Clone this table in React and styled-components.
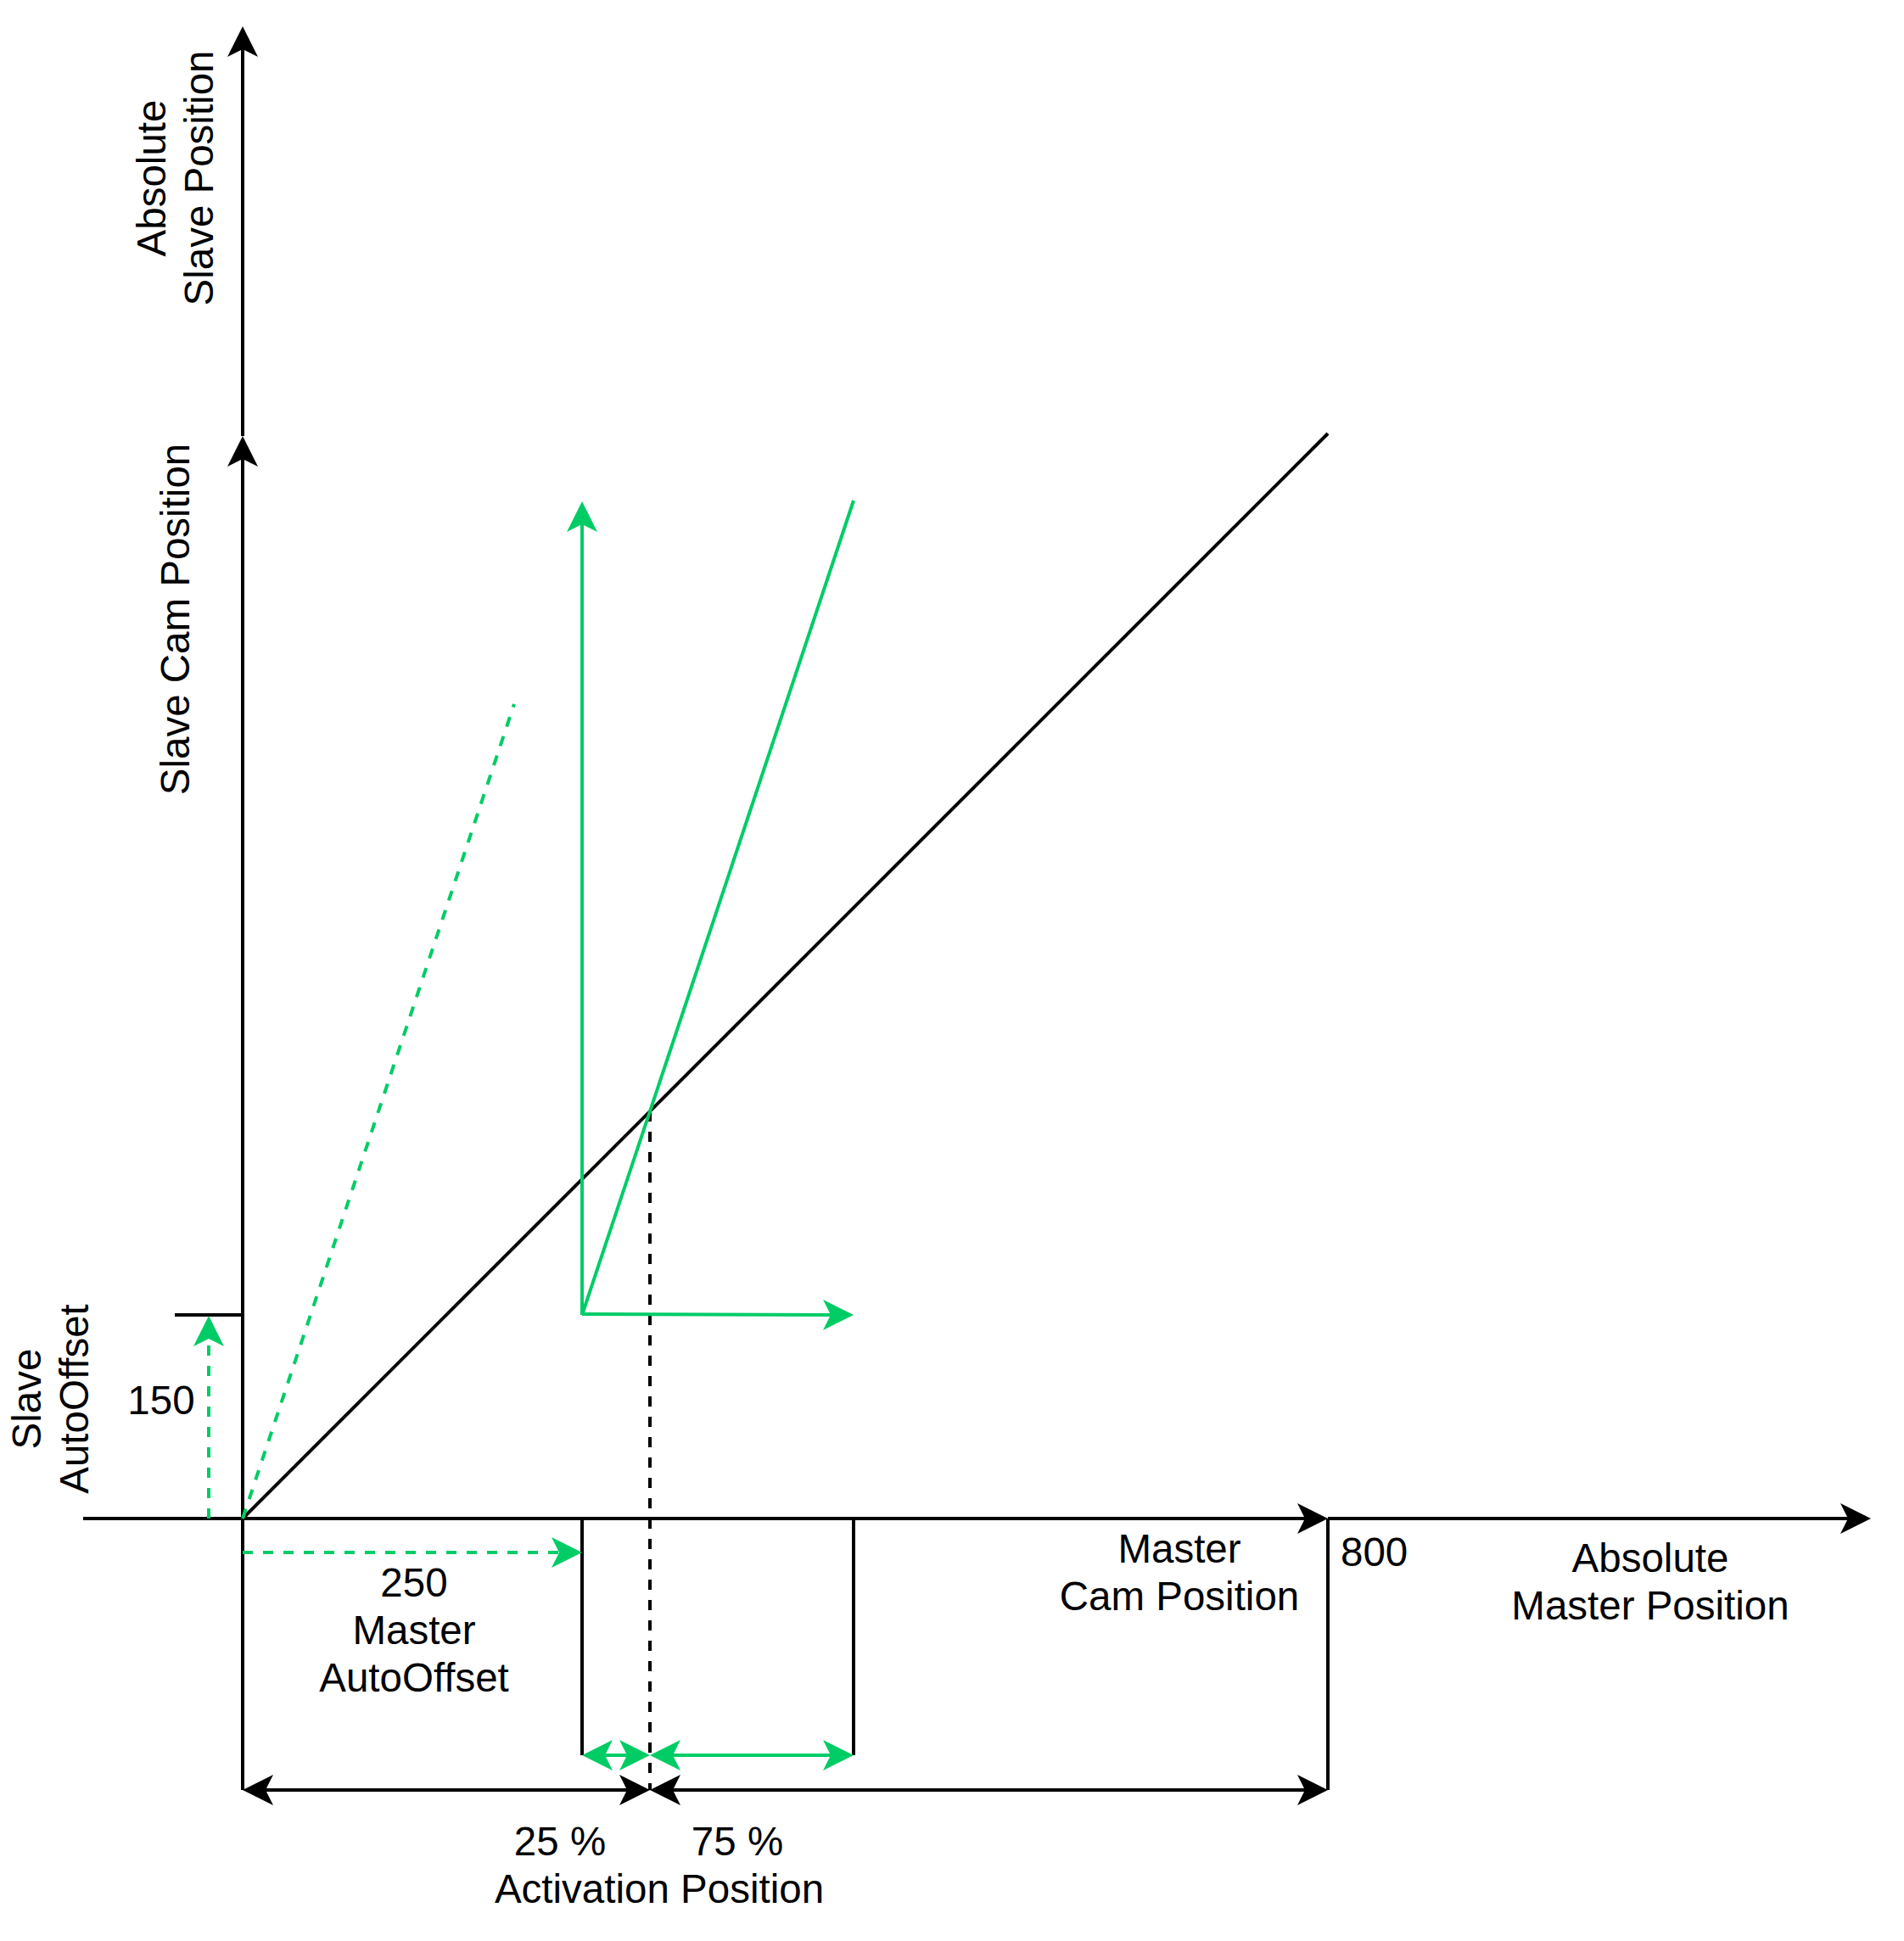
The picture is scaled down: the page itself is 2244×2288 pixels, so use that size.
import React from "react";
import styled, { createGlobalStyle } from "styled-components";

const GREEN = "#00cc66";
const BLACK = "#000000";
const HEAD = { len: 36, half: 18, notch: 27 };
const LINE_GAP = 56;

const GlobalStyle = createGlobalStyle`
  html, body {
    margin: 0;
    padding: 0;
    background: #ffffff;
  }
`;

const Page = styled.div`
  width: 2244px;
  height: 2288px;
  background: #ffffff;
  overflow: hidden;
`;

const Diagram = styled.svg`
  display: block;
  width: 2244px;
  height: 2288px;
`;

const Stroke = styled.line`
  stroke: ${(p) => p.$color};
  stroke-width: 4;
  stroke-dasharray: ${(p) => (p.$dashed ? "12 12" : "none")};
  stroke-linecap: butt;
`;

const Head = styled.path`
  fill: ${(p) => p.$color};
  stroke: none;
`;

const Label = styled.text`
  font-family: "Liberation Sans", Arial, sans-serif;
  font-size: 47.5px;
  fill: #000000;
  text-anchor: ${(p) => p.$anchor || "middle"};
`;

const headPath = (tx, ty, ux, uy) => {
  const nx = -uy;
  const ny = ux;
  const bx = tx - ux * HEAD.len;
  const by = ty - uy * HEAD.len;
  return `M${tx} ${ty} L${bx + nx * HEAD.half} ${by + ny * HEAD.half} L${
    tx - ux * HEAD.notch
  } ${ty - uy * HEAD.notch} L${bx - nx * HEAD.half} ${by - ny * HEAD.half} Z`;
};

// a straight connector, optionally with an arrow at either end
const Connector = ({ from, to, start, end, color = BLACK, dashed }) => {
  const [x1, y1] = from;
  const [x2, y2] = to;
  const d = Math.hypot(x2 - x1, y2 - y1);
  const ux = (x2 - x1) / d;
  const uy = (y2 - y1) / d;
  const sx = start ? x1 + ux * HEAD.notch : x1;
  const sy = start ? y1 + uy * HEAD.notch : y1;
  const ex = end ? x2 - ux * HEAD.notch : x2;
  const ey = end ? y2 - uy * HEAD.notch : y2;
  return (
    <g>
      <Stroke x1={sx} y1={sy} x2={ex} y2={ey} $color={color} $dashed={dashed} />
      {start && <Head d={headPath(x1, y1, -ux, -uy)} $color={color} />}
      {end && <Head d={headPath(x2, y2, ux, uy)} $color={color} />}
    </g>
  );
};

const Caption = ({ x, y, lines, anchor }) => (
  <Label x={x} y={y} $anchor={anchor}>
    {lines.map((line, i) => (
      <tspan key={line} x={x} dy={i === 0 ? 0 : LINE_GAP}>
        {line}
      </tspan>
    ))}
  </Label>
);

// vertical caption reading bottom to top; x is the baseline of the last line
const SideCaption = ({ x, y, lines }) => (
  <Label transform={`translate(${x} ${y}) rotate(-90)`}>
    {lines.map((line, i) => (
      <tspan
        key={line}
        x={0}
        dy={i === 0 ? -(lines.length - 1) * LINE_GAP : LINE_GAP}
      >
        {line}
      </tspan>
    ))}
  </Label>
);

const O = [286, 1790];

const App = () => {
  return (
    <Page>
      <GlobalStyle />
      <Diagram viewBox="0 0 2244 2288">
        {/* axes */}
        <Connector from={[98, 1790]} to={[1565, 1790]} end />
        <Connector from={[1565, 1790]} to={[2205, 1790]} end />
        <Connector from={O} to={[286, 514]} end />
        <Connector from={[286, 514]} to={[286, 31]} end />

        {/* slave offset tick */}
        <Connector from={[206, 1550]} to={[286, 1550]} />

        {/* master cam line */}
        <Connector from={O} to={[1565, 511]} />

        {/* dimension verticals */}
        <Connector from={[286, 1790]} to={[286, 2110]} />
        <Connector from={[686, 1790]} to={[686, 2069]} />
        <Connector from={[1006, 1790]} to={[1006, 2069]} />
        <Connector from={[1565, 1790]} to={[1565, 2110]} />
        <Connector from={[766, 1310]} to={[766, 2110]} dashed />

        {/* offsets */}
        <Connector from={[246, 1790]} to={[246, 1551]} end color={GREEN} dashed />
        <Connector from={[286, 1830]} to={[686, 1830]} end color={GREEN} dashed />
        <Connector from={O} to={[606, 830]} color={GREEN} dashed />

        {/* cam profile frame */}
        <Connector from={[686, 1550]} to={[686, 591]} end color={GREEN} />
        <Connector from={[686, 1550]} to={[1006, 590]} color={GREEN} />
        <Connector from={[686, 1549]} to={[1006, 1550]} end color={GREEN} />

        {/* activation split */}
        <Connector from={[686, 2069]} to={[766, 2069]} start end color={GREEN} />
        <Connector from={[766, 2069]} to={[1006, 2069]} start end color={GREEN} />
        <Connector from={[286, 2110]} to={[766, 2110]} start end />
        <Connector from={[766, 2110]} to={[1565, 2110]} start end />

        {/* labels */}
        <SideCaption x={251} y={210} lines={["Absolute", "Slave Position"]} />
        <SideCaption x={223} y={730} lines={["Slave Cam Position"]} />
        <SideCaption x={104} y={1649} lines={["Slave", "AutoOffset"]} />

        <Caption x={190} y={1667} lines={["150"]} />
        <Caption x={488} y={1882} lines={["250", "Master", "AutoOffset"]} />
        <Caption x={660} y={2187} lines={["25 %"]} />
        <Caption x={869} y={2187} lines={["75 %"]} />
        <Caption x={777} y={2243} lines={["Activation Position"]} />
        <Caption x={1390} y={1842} lines={["Master", "Cam Position"]} />
        <Caption x={1580} y={1846} lines={["800"]} anchor="start" />
        <Caption x={1945} y={1853} lines={["Absolute", "Master Position"]} />
      </Diagram>
    </Page>
  );
};

export default App;
